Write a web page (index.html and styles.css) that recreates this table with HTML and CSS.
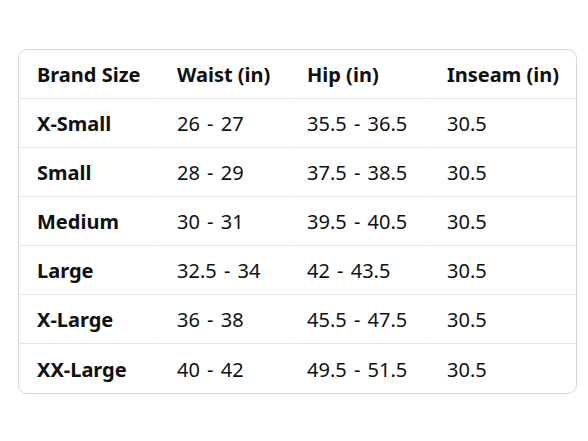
FILE: index.html
```html
<!DOCTYPE html>
<html>
<head>
<meta charset="utf-8">
<link rel="stylesheet" href="styles.css">
</head>
<body>
<div class="table">
  <div class="row head">
    <div class="cell">Brand Size</div><div class="cell">Waist (in)</div><div class="cell">Hip (in)</div><div class="cell">Inseam (in)</div>
  </div>
  <div class="row"><div class="cell b">X-Small</div><div class="cell">26 - 27</div><div class="cell">35.5 - 36.5</div><div class="cell">30.5</div></div>
  <div class="row"><div class="cell b">Small</div><div class="cell">28 - 29</div><div class="cell">37.5 - 38.5</div><div class="cell">30.5</div></div>
  <div class="row"><div class="cell b">Medium</div><div class="cell">30 - 31</div><div class="cell">39.5 - 40.5</div><div class="cell">30.5</div></div>
  <div class="row"><div class="cell b">Large</div><div class="cell">32.5 - 34</div><div class="cell">42 - 43.5</div><div class="cell">30.5</div></div>
  <div class="row"><div class="cell b">X-Large</div><div class="cell">36 - 38</div><div class="cell">45.5 - 47.5</div><div class="cell">30.5</div></div>
  <div class="row last"><div class="cell b">XX-Large</div><div class="cell">40 - 42</div><div class="cell">49.5 - 51.5</div><div class="cell">30.5</div></div>
</div>
</body>
</html>
```
FILE: styles.css
```css
html, body {
  margin: 0;
  background: #fff;
}
body {
  padding: 49px 11px 0 18px;
  font-family: "Noto Sans", "Open Sans", sans-serif;
  color: #0f1111;
  font-size: 20px;
}
.table {
  width: 559px;
  box-sizing: border-box;
  border: 1px solid #d5d9d9;
  border-radius: 9px;
  overflow: hidden;
}
.row {
  display: grid;
  grid-template-columns: 140px 130px 140px 1fr;
  height: 49px;
  border-bottom: 1px solid #e3e6e6;
  box-sizing: border-box;
}
.row.last {
  border-bottom: none;
}
.cell {
  display: flex;
  align-items: center;
  padding-left: 18px;
  border-right: 1px solid #fff;
  margin-bottom: -1px;
  white-space: nowrap;
  word-spacing: 2px;
}
.cell:last-child { border-right: none; }
.head .cell, .cell.b {
  font-weight: 700;
  word-spacing: 0;
}
```
